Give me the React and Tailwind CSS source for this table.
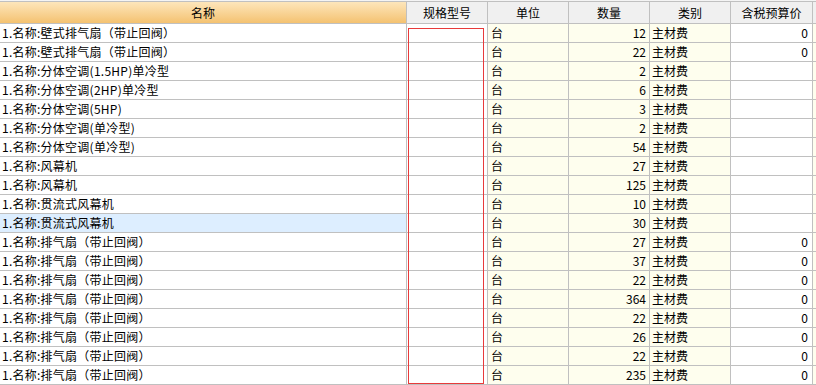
import React from "react";

const rows = [
  ["1.名称:壁式排气扇（带止回阀）", "12", "0"],
  ["1.名称:壁式排气扇（带止回阀）", "22", "0"],
  ["1.名称:分体空调(1.5HP)单冷型", "2", ""],
  ["1.名称:分体空调(2HP)单冷型", "6", ""],
  ["1.名称:分体空调(5HP)", "3", ""],
  ["1.名称:分体空调(单冷型)", "2", ""],
  ["1.名称:分体空调(单冷型)", "54", ""],
  ["1.名称:风幕机", "27", ""],
  ["1.名称:风幕机", "125", ""],
  ["1.名称:贯流式风幕机", "10", ""],
  ["1.名称:贯流式风幕机", "30", ""],
  ["1.名称:排气扇（带止回阀）", "27", "0"],
  ["1.名称:排气扇（带止回阀）", "37", "0"],
  ["1.名称:排气扇（带止回阀）", "22", "0"],
  ["1.名称:排气扇（带止回阀）", "364", "0"],
  ["1.名称:排气扇（带止回阀）", "22", "0"],
  ["1.名称:排气扇（带止回阀）", "26", "0"],
  ["1.名称:排气扇（带止回阀）", "22", "0"],
  ["1.名称:排气扇（带止回阀）", "235", "0"],
];

const cols = "grid-cols-[407px_81px_81px_81px_81px_82px_1fr]";

export default function App() {
  return (
    <div
      className="relative w-[816px] h-[385px] overflow-hidden bg-white text-[12px] leading-[18px] text-black"
      style={{ fontFamily: '"Noto Sans CJK SC", "Liberation Sans", sans-serif' }}
    >
      <div className="h-px bg-[#f4f4f4]" />
      <div className={`grid ${cols} h-[23px] border-t border-b border-[#c0c0c0]`}>
        <div className="border-r border-[#c0c0c0] bg-gradient-to-b from-[#fde6bb] to-[#f4c270] flex items-center justify-center">名称</div>
        <div className="border-r border-[#c0c0c0] bg-[#f0f0f0] flex items-center justify-center">规格型号</div>
        <div className="border-r border-[#c0c0c0] bg-[#f0f0f0] flex items-center justify-center">单位</div>
        <div className="border-r border-[#c0c0c0] bg-[#f0f0f0] flex items-center justify-center">数量</div>
        <div className="border-r border-[#c0c0c0] bg-[#f0f0f0] flex items-center justify-center">类别</div>
        <div className="border-r border-[#c0c0c0] bg-[#f0f0f0] flex items-center justify-center">含税预算价</div>
        <div className="bg-[#f0f0f0]" />
      </div>
      {rows.map((r, i) => (
        <div key={i} className={`grid ${cols} h-[19px] border-b border-[#c0c0c0]`}>
          <div className={`border-r border-[#c0c0c0] pl-[2px] whitespace-nowrap tracking-[0.25px] ${i === 10 ? "bg-[#ddeeff]" : "bg-white"}`}>{r[0]}</div>
          <div className="border-r border-[#c0c0c0] bg-white" />
          <div className="border-r border-[#c0c0c0] bg-[#fefeee] pl-[3px]">台</div>
          <div className="border-r border-[#c0c0c0] bg-[#fefeee] text-right pr-[3px]">{r[1]}</div>
          <div className="border-r border-[#c0c0c0] bg-[#fefeee] pl-[2px]">主材费</div>
          <div className="border-r border-[#c0c0c0] bg-white text-right pr-[4px]">{r[2]}</div>
          <div className="bg-[#fefeee]" />
        </div>
      ))}
      <div className="absolute left-[408px] top-[28px] w-[76px] h-[356px] border border-[#e83a3a]" />
    </div>
  );
}
